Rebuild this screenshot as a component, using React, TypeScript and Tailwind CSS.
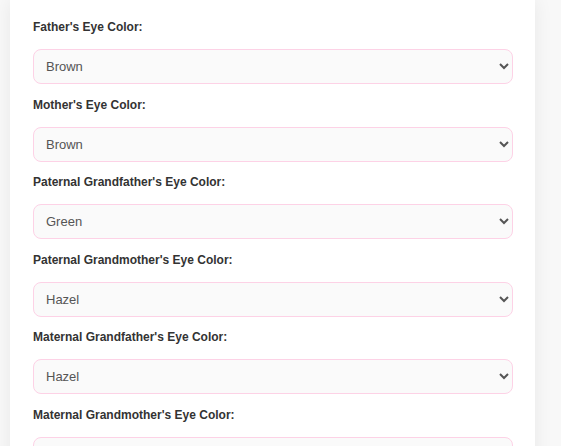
const fields = [
  { label: "Father's Eye Color:", value: "Brown" },
  { label: "Mother's Eye Color:", value: "Brown" },
  { label: "Paternal Grandfather's Eye Color:", value: "Green" },
  { label: "Paternal Grandmother's Eye Color:", value: "Hazel" },
  { label: "Maternal Grandfather's Eye Color:", value: "Hazel" },
  { label: "Maternal Grandmother's Eye Color:", value: "Blue" },
];

const colors = ["Brown", "Blue", "Green", "Hazel", "Gray", "Amber"];

export default function App() {
  return (
    <div className="h-[446px] overflow-hidden bg-[#f8f8f8] font-['Liberation_Sans',Arial,sans-serif]">
      <div className="ml-[10px] w-[525px] bg-white pl-[23px] pr-[22px] pt-[18px] pb-10 shadow-[0_0_18px_rgba(0,0,0,0.07)]">
        {fields.map((f) => (
          <div key={f.label} className="mb-[11.5px]">
            <label className="mb-[13px] block text-[12px] font-bold leading-[18px] text-[#333]">
              {f.label}
            </label>
            <select
              defaultValue={f.value}
              className="block h-[35px] w-full rounded-lg border border-[#fdd2e6] bg-[#fafafa] pl-2 pr-2 text-[13px] text-[#555] outline-none"
            >
              {colors.map((c) => (
                <option key={c}>{c}</option>
              ))}
            </select>
          </div>
        ))}
      </div>
    </div>
  );
}
